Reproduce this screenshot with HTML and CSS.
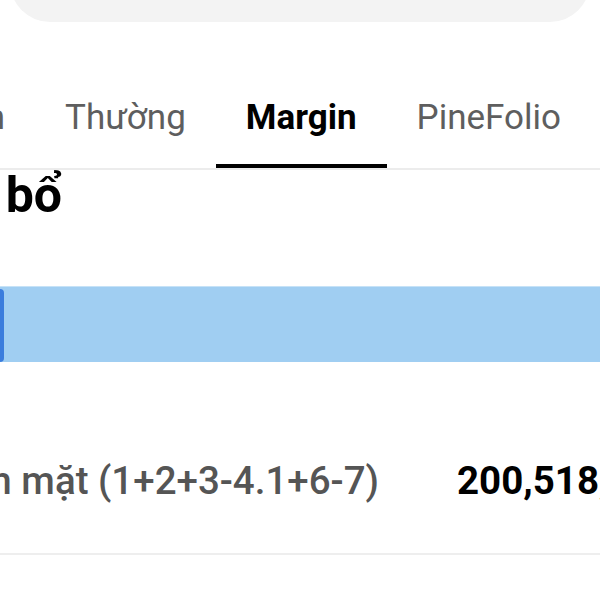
FILE: index.html
```html
<!DOCTYPE html>
<html lang="vi">
<head>
<meta charset="utf-8">
<title>Margin</title>
<link rel="stylesheet" href="styles.css">
</head>
<body>
<div class="page">
  <div class="search-card"></div>

  <nav class="tabs">
    <div class="tab tab-cut"><span>Tiền</span></div>
    <div class="tab">Thường</div>
    <div class="tab active">Margin</div>
    <div class="tab">PineFolio</div>
  </nav>

  <div class="section-title"><span>Phân bổ</span></div>

  <div class="alloc-bar">
    <div class="alloc-handle"></div>
  </div>

  <div class="row">
    <div class="row-label"><span>Tiền mặt (1+2+3-4.1+6-7)</span></div>
    <div class="row-value">200,518,460</div>
  </div>
</div>
</body>
</html>
```

FILE: styles.css
```css
html, body {
  margin: 0;
  padding: 0;
  background: #ffffff;
  overflow: hidden;
}

.page {
  width: 600px;
  height: 600px;
  overflow: hidden;
  font-family: Roboto, "Noto Sans", "Liberation Sans", sans-serif;
  color: #000;
}

.search-card {
  height: 62px;
  margin: -40px 10px 0;
  background: #f3f3f3;
  border-radius: 0 0 40px 40px;
}

.tabs {
  display: flex;
  border-bottom: 2px solid #ececec;
  white-space: nowrap;
}

.tab {
  flex: none;
  padding: 75px 30px 26px;
  font-size: 35px;
  line-height: 41px;
  color: #5e5e5e;
  border-bottom: 4px solid transparent;
}

.tab-cut {
  width: 5px;
  display: flex;
  justify-content: flex-end;
  padding-left: 0;
  overflow: hidden;
}

.tab.active {
  color: #000;
  font-weight: 700;
  border-bottom-color: #000;
}

.section-title {
  width: 62px;
  margin-top: 2px;
  display: flex;
  justify-content: flex-end;
  white-space: nowrap;
  font-size: 50px;
  line-height: 46px;
  font-weight: 700;
}

.alloc-bar {
  margin-top: 68px;
  height: 76px;
  box-sizing: border-box;
  padding-top: 2px;
  display: flex;
  background: #a0cef2;
  border-top: 1px solid #c6e2f7;
}

.alloc-handle {
  width: 4px;
  background: #3b7ddd;
  border-radius: 0 4px 4px 0;
}

.row {
  display: grid;
  grid-template-columns: 379px minmax(0, 1fr);
  column-gap: 78px;
  padding: 96px 0 49px;
  border-bottom: 2px solid #eeeeee;
  font-size: 38.5px;
  line-height: 46px;
  white-space: nowrap;
}

.row-label {
  display: flex;
  justify-content: flex-end;
  color: #555555;
  font-weight: 500;
}

.row-value {
  font-weight: 700;
  color: #000;
}
```
